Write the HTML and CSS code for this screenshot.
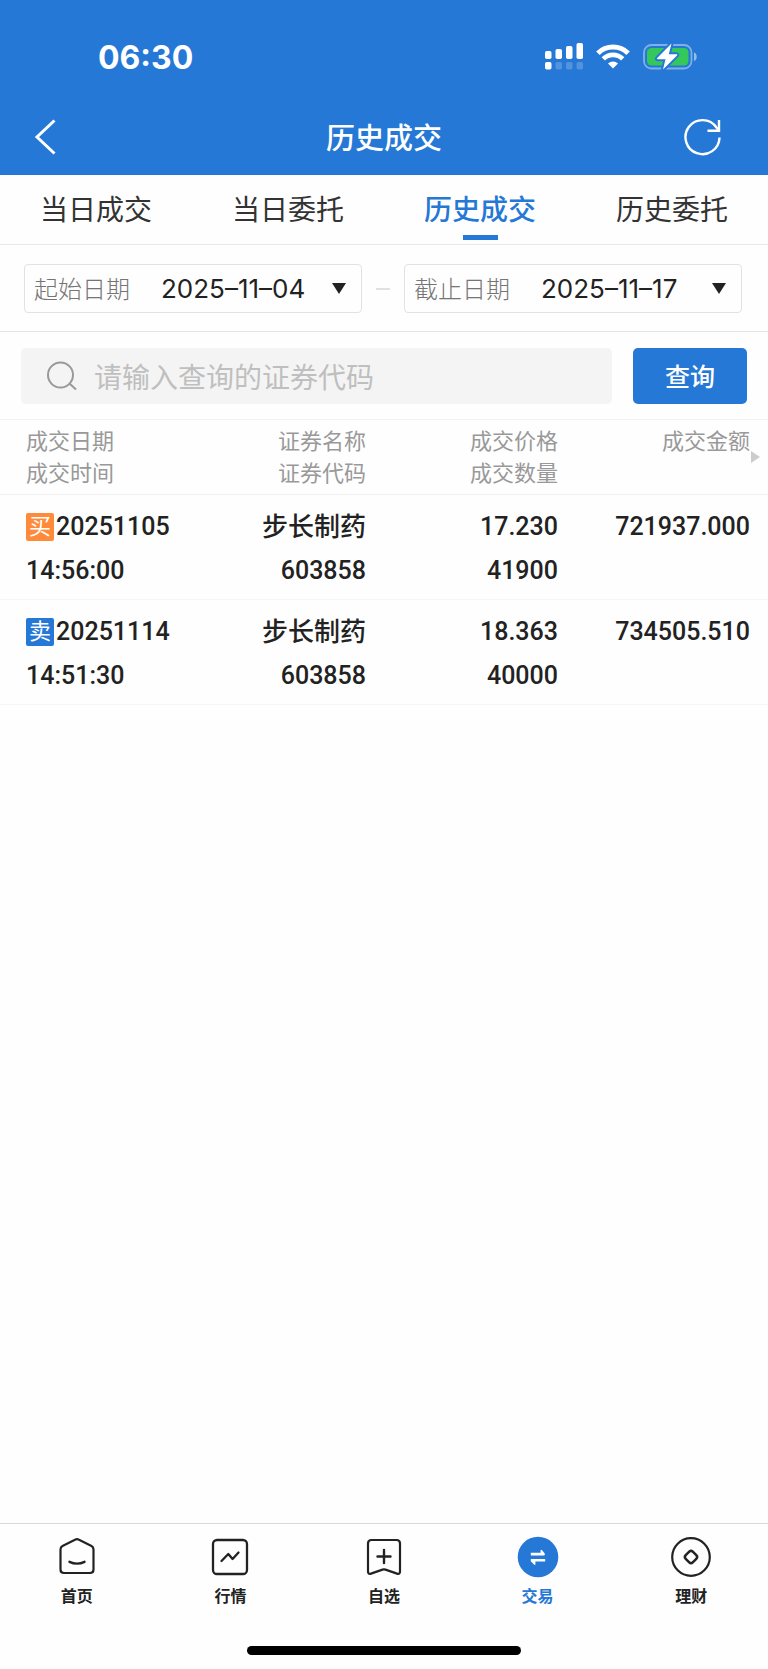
FILE: index.html
```html
<!DOCTYPE html>
<html lang="zh-CN">
<head>
<meta charset="utf-8">
<meta name="viewport" content="width=device-width, initial-scale=1">
<title>历史成交</title>
<link rel="stylesheet" href="styles.css">
</head>
<body>
<div class="app">
  <header class="header">
    <div class="status">
      <span class="status-time">06:30</span>
      <div class="status-icons">
        <svg width="38" height="28" viewBox="0 0 38 28" fill="#fff" aria-hidden="true">
          <rect x="0" y="8" width="6.5" height="8" rx="1.8"/>
          <rect x="10.5" y="6" width="6.5" height="10" rx="1.8"/>
          <rect x="21" y="3" width="6.5" height="13" rx="1.8"/>
          <rect x="31.500" y="0" width="6.500" height="16" rx="1.8"/>
          <rect x="0" y="19" width="6.500" height="7.500" rx="1.8"/>
          <g opacity=".2">
            <rect x="10.500" y="19" width="6.500" height="7.500" rx="1.8"/>
            <rect x="21" y="19" width="6.500" height="7.500" rx="1.8"/>
            <rect x="31.500" y="19" width="6.500" height="7.500" rx="1.8"/>
          </g>
        </svg>
        <svg width="34" height="28" viewBox="0 0 34 28" fill="none" stroke="#fff" aria-hidden="true">
          <path d="M1.900 10.200A21.500 21.500 0 0 1 32.100 10.200" stroke-width="5"/>
          <path d="M7.300 15.900A13.700 13.700 0 0 1 26.700 15.900" stroke-width="4.800"/>
          <path d="M17 25.500l-5-5.100a7.300 7.300 0 0 1 10 0z" fill="#fff" stroke="none"/>
        </svg>
        <svg width="55" height="28" viewBox="0 0 55 28" aria-hidden="true">
          <rect x="1" y="2" width="47.500" height="23.500" rx="7.500" fill="none" stroke="#fff" stroke-opacity=".42" stroke-width="1.800"/>
          <path d="M51 9.500c3.600 1 3.600 7.500 0 8.500z" fill="#fff" fill-opacity=".5"/>
          <rect x="4" y="5" width="41.500" height="17.500" rx="4.500" fill="#34c759"/>
          <path d="M28.500 .500L14.200 15.100c-.6.600-.3 1.100.500 1.100h7.800L20 26.500 34 12.400c.6-.6.300-1.200-.500-1.200h-7.700z" fill="#fff" stroke="#2578d5" stroke-width="4" stroke-linejoin="round"/>
          <path d="M28.500 .500L14.200 15.100c-.6.600-.3 1.100.500 1.100h7.800L20 26.500 34 12.400c.6-.6.300-1.200-.500-1.200h-7.700z" fill="#fff"/>
        </svg>
      </div>
    </div>
    <nav class="navbar">
      <button class="icon-button" type="button" aria-label="返回">
        <svg width="24" height="38" viewBox="0 0 24 38" fill="none" stroke="#fff" stroke-width="3"><path d="M20.500 2.500L3 19l17.500 16.500"/></svg>
      </button>
      <h1 class="title">历史成交</h1>
      <button class="icon-button refresh" type="button" aria-label="刷新">
        <svg width="38" height="38" viewBox="0 0 38 38" fill="none" stroke="#fff" stroke-width="2.400"><path d="M35.500 19.500A17 17 0 1 1 32.500 9.500L35 12.500"/><path d="M35 2v10.700H23.500"/></svg>
      </button>
    </nav>
  </header>

  <nav class="tabs">
    <a class="tab" href="#today-deals">当日成交</a>
    <a class="tab" href="#today-orders">当日委托</a>
    <a class="tab tab-active" href="#history-deals" aria-current="page">历史成交</a>
    <a class="tab" href="#history-orders">历史委托</a>
  </nav>

  <div class="dates">
    <button class="date" type="button">
      <span class="date-label">起始日期</span>
      <span class="date-value">2025–11–04</span>
      <svg class="date-arrow" width="14" height="12" viewBox="0 0 14 12" fill="#222" aria-hidden="true"><path d="M0 0h14L7 11z"/></svg>
    </button>
    <span class="dates-dash"></span>
    <button class="date" type="button">
      <span class="date-label">截止日期</span>
      <span class="date-value">2025–11–17</span>
      <svg class="date-arrow" width="14" height="12" viewBox="0 0 14 12" fill="#222" aria-hidden="true"><path d="M0 0h14L7 11z"/></svg>
    </button>
  </div>

  <form class="search">
    <label class="search-box">
      <svg width="32" height="32" viewBox="0 0 32 32" fill="none" stroke="#999" stroke-width="2" aria-hidden="true"><circle cx="14.500" cy="15" r="12.500"/><path d="M23.500 23.500l6.500 6"/></svg>
      <input class="search-input" type="text" aria-label="证券代码" placeholder="请输入查询的证券代码">
    </label>
    <button class="search-button" type="submit">查询</button>
  </form>

  <main class="content">
    <table class="deals">
      <thead>
        <tr>
          <th scope="col">成交日期<br>成交时间</th>
          <th scope="col">证券名称<br>证券代码</th>
          <th scope="col">成交价格<br>成交数量</th>
          <th scope="col">成交金额<svg class="more" width="9" height="12" viewBox="0 0 9 12" fill="#ccc" aria-hidden="true"><path d="M0 0l9 6-9 6z"/></svg></th>
        </tr>
      </thead>
      <tbody>
        <tr>
          <td><span class="line line-dated"><span class="badge badge-buy">买</span>20251105</span><span class="line">14:56:00</span></td>
          <td><span class="line line-name">步长制药</span><span class="line">603858</span></td>
          <td><span class="line">17.230</span><span class="line">41900</span></td>
          <td><span class="line">721937.000</span></td>
        </tr>
        <tr>
          <td><span class="line line-dated"><span class="badge badge-sell">卖</span>20251114</span><span class="line">14:51:30</span></td>
          <td><span class="line line-name">步长制药</span><span class="line">603858</span></td>
          <td><span class="line">18.363</span><span class="line">40000</span></td>
          <td><span class="line">734505.510</span></td>
        </tr>
      </tbody>
    </table>
  </main>

  <footer class="footer">
    <nav class="menu">
      <a class="menu-item" href="#home">
        <svg width="42" height="42" viewBox="0 0 42 42" fill="none" stroke="#222" stroke-width="2.200" stroke-linecap="round" stroke-linejoin="round" aria-hidden="true"><path d="M19.500 3.500L6.500 10Q4.500 11 4.500 13.500V33.500Q4.500 37 8 37H34Q37.500 37 37.500 33.500V13.500Q37.500 11 35.500 10L22.500 3.500Q21 2.600 19.500 3.500z"/><path d="M13.500 25.800q7.500 3.700 15 0" stroke-width="2.400"/></svg>
        首页
      </a>
      <a class="menu-item" href="#market">
        <svg width="42" height="42" viewBox="0 0 42 42" fill="none" stroke="#222" stroke-width="2.300" stroke-linecap="round" stroke-linejoin="round" aria-hidden="true"><rect x="4" y="4" width="34" height="34" rx="4"/><path d="M12.500 25l6.800-7 4.300 5 5.900-6.500"/></svg>
        行情
      </a>
      <a class="menu-item" href="#watchlist">
        <svg width="42" height="42" viewBox="0 0 42 42" fill="none" stroke="#222" stroke-width="2.200" stroke-linecap="round" stroke-linejoin="round" aria-hidden="true"><path d="M8.500 4H33.500Q37 4 37 7.500V35.500Q37 38.500 34 37.600L22.500 33.600Q21 33.100 19.500 33.600L8 37.600Q5 38.500 5 35.500V7.500Q5 4 8.500 4z"/><path d="M21 14v13M14.500 20.500h13" stroke-width="2.400"/></svg>
        自选
      </a>
      <a class="menu-item menu-active" href="#trade" aria-current="page">
        <svg width="42" height="42" viewBox="0 0 42 42" aria-hidden="true"><circle cx="21" cy="21" r="20.300" fill="#2578d5"/><path d="M13.800 16.800H23.600V14.600Q23.600 13.200 24.800 14L27.400 17Q28.600 19.400 26.800 19.400H13.800zM28.200 23H13.800V25.200L17.300 28.800Q18.400 29.400 18.400 28V25.600H28.200z" fill="#fff"/></svg>
        交易
      </a>
      <a class="menu-item" href="#wealth">
        <svg width="42" height="42" viewBox="0 0 42 42" fill="none" stroke="#222" stroke-width="2.200" aria-hidden="true"><circle cx="21" cy="21" r="18.800"/><rect x="16" y="16" width="10" height="10" rx="2.500" transform="rotate(45 21 21)" stroke-width="2.500"/></svg>
        理财
      </a>
    </nav>
    <div class="home-indicator"></div>
  </footer>
</div>
</body>
</html>
```

FILE: styles.css
```css
* {
  box-sizing: border-box;
}

body {
  margin: 0;
  background: #fefefe;
  color: #222;
  font-family: "Noto Sans CJK SC", sans-serif;
}

button,
input {
  margin: 0;
  padding: 0;
  border: 0;
  background: none;
  color: inherit;
  font: inherit;
}

a {
  color: inherit;
  text-decoration: none;
}

svg {
  display: block;
  flex: none;
}

.app {
  display: flex;
  flex-direction: column;
  min-height: 100vh;
}

.header {
  background: #2578d5;
  color: #fff;
}

.status {
  display: flex;
  align-items: center;
  justify-content: space-between;
  height: 99px;
  padding: 15px 70px 0 98px;
}

.status-time {
  padding-top: 2px;
  font: 700 32px/40px Inter, sans-serif;
}

.status-icons {
  display: flex;
  gap: 13px;
}

.navbar {
  display: grid;
  grid-template-columns: 1fr auto 1fr;
  align-items: center;
  height: 76px;
  padding: 0 46px 0 34px;
}

.icon-button {
  display: flex;
  justify-self: start;
}

.refresh {
  justify-self: end;
}

.title {
  margin: 0;
  padding: 0 0 3px 12px;
  font-size: 29px;
  font-weight: 500;
  line-height: 40px;
}

.tabs {
  display: grid;
  grid-template-columns: repeat(4, 1fr);
  border-bottom: 1px solid #e8e8e8;
}

.tab {
  display: flex;
  flex-direction: column;
  align-items: center;
  height: 69px;
  padding-top: 13px;
  color: #333;
  font-size: 28px;
  line-height: 40px;
}

.tab-active {
  color: #2578d5;
  font-weight: 500;
}

.tab-active::after {
  width: 35px;
  height: 5px;
  margin-top: 7px;
  background: #2578d5;
  content: "";
}

.dates {
  display: flex;
  align-items: center;
  gap: 14px;
  padding: 19px 26px 18px 24px;
  border-bottom: 1px solid #e4e4e4;
}

.date {
  display: flex;
  flex: 1;
  align-items: center;
  height: 49px;
  padding: 0 15px 0 9px;
  border: 1px solid #e2e2e2;
  border-radius: 4px;
}

.date-label {
  padding-bottom: 2px;
  color: #757575;
  font-size: 24px;
  font-weight: 300;
}

.date-value {
  margin-left: 31px;
  font-family: Inter, sans-serif;
  font-size: 26px;
}

.date-arrow {
  margin-left: auto;
}

.dates-dash {
  width: 14px;
  height: 2px;
  background: #e0e0e0;
}

.search {
  display: flex;
  gap: 21px;
  padding: 16px 21px 15px;
  border-bottom: 1px solid #f2f2f2;
}

.search-box {
  display: flex;
  flex: 1;
  align-items: center;
  gap: 16px;
  min-width: 0;
  height: 56px;
  padding: 0 25px;
  border-radius: 5px;
  background: #f4f4f4;
}

.search-input {
  flex: 1;
  min-width: 0;
  outline: 0;
  font-size: 28px;
}

.search-input::placeholder {
  color: #bfbfbf;
  opacity: 1;
}

.search-button {
  width: 114px;
  padding-bottom: 3px;
  border-radius: 5px;
  background: #2578d5;
  color: #fff;
  font-size: 25px;
  font-weight: 500;
}

.content {
  flex: 1;
}

.deals {
  width: 100%;
  border-collapse: separate;
  border-spacing: 0;
  table-layout: fixed;
}

.deals th {
  position: relative;
  padding: 3px 18px 7px 0;
  border-bottom: 1px solid #f2f2f2;
  color: #999;
  font-size: 22px;
  font-weight: 400;
  line-height: 32px;
  text-align: right;
  vertical-align: top;
}

.deals td {
  padding: 10px 18px 6px 0;
  border-bottom: 1px solid #f6f6f6;
  font-family: Roboto, "Noto Sans CJK SC", sans-serif;
  font-size: 25px;
  font-weight: 500;
  text-align: right;
  vertical-align: top;
}

.deals th:first-child,
.deals td:first-child {
  padding-right: 0;
  padding-left: 26px;
  text-align: left;
}

.more {
  position: absolute;
  top: 31px;
  right: 8px;
}

.line {
  display: block;
  height: 44px;
  line-height: 44px;
}

.line-name {
  font-size: 26px;
}

.line-dated {
  display: flex;
  align-items: center;
  gap: 2px;
}

.badge {
  width: 28px;
  height: 28px;
  border-radius: 2px;
  color: #fff;
  font-size: 22px;
  font-weight: 400;
  line-height: 28px;
  text-align: center;
}

.badge-buy {
  background: #ff8b3a;
}

.badge-sell {
  background: #2578d5;
}

.footer {
  border-top: 1px solid #d8d8d8;
}

.menu {
  display: grid;
  grid-template-columns: repeat(5, 1fr);
  padding-top: 12px;
}

.menu-item {
  display: flex;
  flex-direction: column;
  align-items: center;
  gap: 5px;
  font-size: 16px;
  font-weight: 700;
  line-height: 24px;
}

.menu-active {
  color: #2578d5;
}

.home-indicator {
  width: 274px;
  height: 9px;
  margin: 39px auto 14px;
  border-radius: 5px;
  background: #000;
}
```
